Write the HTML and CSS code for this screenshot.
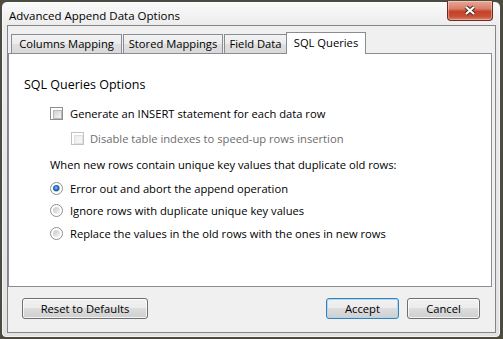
FILE: index.html
```html
<!DOCTYPE html>
<html lang="en">
<head>
  <meta charset="UTF-8" />
  <title>Advanced Append Data Options</title>
  <link rel="stylesheet" href="styles.css">
</head>
<body>
  <div class="window">
    <div class="titlebar">
      <span class="title">Advanced Append Data Options</span>
      <button class="close-btn" title="Close">
        <svg width="14" height="11" viewBox="0 0 14 11">
          <path d="M3 2 L11 9 M11 2 L3 9" stroke="#4a2a24" stroke-width="4.2" fill="none" />
          <path d="M3 2 L11 9 M11 2 L3 9" stroke="#fff" stroke-width="2.2" fill="none" />
        </svg>
      </button>
    </div>

    <div class="client">
      <div class="tabs">
        <div class="tab tab-columns">Columns Mapping</div>
        <div class="tab tab-stored">Stored Mappings</div>
        <div class="tab tab-field">Field Data</div>
        <div class="tab tab-sql active">SQL Queries</div>
      </div>

      <div class="panel">
        <div class="group-title">SQL Queries Options</div>

        <label class="option indent cb-main">
          <span class="checkbox"></span>
          Generate an INSERT statement for each data row
        </label>
        <label class="option sub disabled cb-sub">
          <span class="checkbox"></span>
          Disable table indexes to speed-up rows insertion
        </label>

        <div class="option indent prompt">When new rows contain unique key values that duplicate old rows:</div>

        <label class="option indent r1">
          <span class="radio checked"></span>
          Error out and abort the append operation
        </label>
        <label class="option indent r2">
          <span class="radio"></span>
          Ignore rows with duplicate unique key values
        </label>
        <label class="option indent r3">
          <span class="radio"></span>
          Replace the values in the old rows with the ones in new rows
        </label>
      </div>

      <div class="footer">
        <button class="btn reset">Reset to Defaults</button>
        <div class="spacer"></div>
        <button class="btn default">Accept</button>
        <button class="btn cancel">Cancel</button>
      </div>
    </div>
  </div>
</body>
</html>
```

FILE: styles.css
```css
* {
  margin: 0;
  padding: 0;
  box-sizing: border-box;
}

body {
  width: 503px;
  height: 339px;
  overflow: hidden;
  background: #4d4b3c;
  font-family: "Open Sans", "Noto Sans", sans-serif;
  font-size: 11.2px;
  color: #000;
}

/* Window frame */
.window {
  margin: 1px 0 0 1px;
  width: 500px;
  height: 337px;
  border: 1px solid #4a4a4a;
  border-radius: 6px 6px 5px 5px;
  background: linear-gradient(#fafafa, #ececec 24px, #e2e2e2);
  box-shadow: inset 0 0 0 1px rgba(255, 255, 255, 0.6);
  padding: 0 4px 4px 5px;
  display: flex;
  flex-direction: column;
}

.titlebar {
  height: 23px;
  display: flex;
  justify-content: space-between;
  align-items: center;
}

.title {
  margin-left: 2px;
  padding-top: 3px;
  font-size: 11.5px;
  color: #000;
}

.close-btn {
  align-self: flex-start;
  margin-top: -1px;
  margin-right: 3px;
  width: 46px;
  height: 20px;
  border: 1px solid #6b2a1f;
  border-top: none;
  border-radius: 0 0 4px 4px;
  background: linear-gradient(#e9a797, #d8806b 40%, #c6432b 55%, #c84d33 80%, #d9836b);
  box-shadow: inset 0 0 0 1px rgba(255, 255, 255, 0.35);
  display: flex;
  align-items: center;
  justify-content: center;
}

/* Client area */
.client {
  flex: 1;
  border: 1px solid #858585;
  background: #f0f0f0;
  display: flex;
  flex-direction: column;
}

.tabs {
  display: flex;
  align-items: flex-end;
  height: 21px;
  margin: 6px 0 0 3px;
  position: relative;
  z-index: 1;
}

.tab {
  height: 19px;
  line-height: 18px;
  border: 1px solid #898c95;
  border-bottom: none;
  background: linear-gradient(#f3f3f3, #ebebeb 50%, #dfdfdf 50%, #d9d9d9);
  text-align: center;
  white-space: nowrap;
}

.tab + .tab {
  margin-left: 1px;
}

.tab-columns { width: 111px; }
.tab-stored { width: 100px; }
.tab-field { width: 63px; }
.tab-sql { width: 80px; }

.tab.active {
  height: 22px;
  margin-bottom: -1px;
  margin-left: -1px;
  padding-top: 1px;
  background: #fff;
}

.panel {
  height: 234px;
  margin-right: 3px;
  border: 1px solid #898c95;
  background: #fff;
  padding: 23px 0 0 15px;
}

.group-title {
  font-size: 12.5px;
  line-height: 16px;
}

.option {
  display: flex;
  align-items: center;
  gap: 7px;
  height: 16px;
  white-space: nowrap;
}

.indent {
  margin-left: 26px;
}

.sub {
  margin-left: 47px;
  gap: 6px;
}

.disabled {
  color: #6d6d6d;
}

.cb-main { margin-top: 12px; }
.cb-sub { margin-top: 9px; }
.prompt { margin-top: 10px; }
.r1 { margin-top: 8px; }
.r2 { margin-top: 6px; }
.r3 { margin-top: 7px; }

/* Win7 style check boxes and radios */
.checkbox {
  flex: none;
  width: 13px;
  height: 13px;
  border: 1px solid #8e8f8f;
  background: #fff;
  padding: 2px;
}

.checkbox::before {
  content: '';
  display: block;
  width: 100%;
  height: 100%;
  border: 1px solid #b9b9b9;
  background: linear-gradient(135deg, #d0d0d0, #f5f5f5);
}

.disabled .checkbox {
  border-color: #c2c2c2;
}

.disabled .checkbox::before {
  border-color: #e0e0e0;
  background: linear-gradient(135deg, #ececec, #f8f8f8);
}

.radio {
  flex: none;
  width: 13px;
  height: 13px;
  border-radius: 50%;
  border: 1px solid #8e8f8f;
  background: #fff;
  padding: 2px;
}

.radio::before {
  content: '';
  display: block;
  width: 100%;
  height: 100%;
  border-radius: 50%;
  background: linear-gradient(135deg, #c8c8c8, #f4f4f4);
}

.radio.checked::before {
  background: radial-gradient(circle at 45% 40%, #9fd6fb 0, #3b88dc 1.4px, #1b4fa6 3px, #9fb2c8 3.4px, #dfe6ee 4.5px);
}

/* Buttons */
.footer {
  flex: 1;
  display: flex;
  align-items: flex-start;
  padding: 11px 15px 0 14px;
}

.spacer {
  flex: 1;
}

.btn {
  height: 21px;
  width: 73px;
  border: 1px solid #707070;
  border-radius: 3px;
  background: linear-gradient(#f2f2f2, #ebebeb 50%, #dddddd 50%, #cfcfcf);
  box-shadow: inset 0 0 0 1px rgba(255, 255, 255, 0.75);
  font: inherit;
  color: #000;
}

.btn.reset {
  width: 126px;
}

.btn.default {
  border-color: #3c7fb1;
  box-shadow: inset 0 0 0 1px #a9dbf6;
}

.btn.cancel {
  margin-left: 8px;
}
```
